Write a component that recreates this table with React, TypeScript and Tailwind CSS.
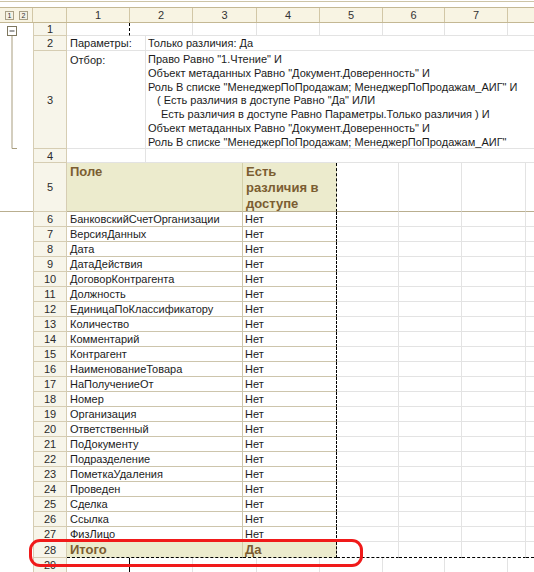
import React from "react";

const FIELDS = [
  "БанковскийСчетОрганизации",
  "ВерсияДанных",
  "Дата",
  "ДатаДействия",
  "ДоговорКонтрагента",
  "Должность",
  "ЕдиницаПоКлассификатору",
  "Количество",
  "Комментарий",
  "Контрагент",
  "НаименованиеТовара",
  "НаПолучениеОт",
  "Номер",
  "Организация",
  "Ответственный",
  "ПоДокументу",
  "Подразделение",
  "ПометкаУдаления",
  "Проведен",
  "Сделка",
  "Ссылка",
  "ФизЛицо",
];

const FILTER = [
  { text: 'Право Равно "1.Чтение" И', indent: "pl-0" },
  { text: 'Объект метаданных Равно "Документ.Доверенность" И', indent: "pl-0" },
  { text: 'Роль В списке "МенеджерПоПродажам; МенеджерПоПродажам_АИГ" И', indent: "pl-0" },
  { text: '( Есть различия в доступе Равно "Да" ИЛИ', indent: "pl-[9px]" },
  { text: "Есть различия в доступе Равно Параметры.Только различия ) И", indent: "pl-[13px]" },
  { text: 'Объект метаданных Равно "Документ.Доверенность" И', indent: "pl-0" },
  { text: 'Роль В списке "МенеджерПоПродажам; МенеджерПоПродажам_АИГ"', indent: "pl-0" },
];

const HEAD_COLS = ["w-[63px]", "w-[63px]", "w-[64px]", "w-[63px]", "w-[63px]", "w-[62px]", "w-[63px]"];
const GRID_RIGHT = ["w-[62px]", "w-[63px]", "w-[64px]"];

const Num = ({ n }: { n?: number }) => (
  <div className="w-[34px] shrink-0 border-l border-r border-b border-[#d6cdb3] bg-[#f7f5ea] flex items-center justify-center text-[#2b2b2b]">
    {n}
  </div>
);

// empty light grid cells right of the report (337 .. end)
const RightGrid = ({ bottom = "border-[#e3e3e3]" }: { bottom?: string }) => (
  <>
    {GRID_RIGHT.map((w, i) => (
      <div key={i} className={`${w} shrink-0 border-r border-b border-r-[#e3e3e3] ${bottom}`} />
    ))}
    <div className={`flex-1 border-b ${bottom}`} />
  </>
);

// row that follows the header columns (rows 1 and 29)
const HeaderGridRow = ({ n, h, first }: { n: number; h: string; first: string }) => (
  <div className={`flex ${h}`}>
    <Num n={n} />
    {HEAD_COLS.map((w, i) => (
      <div
        key={i}
        className={`${w} shrink-0 border-b border-r border-b-[#e3e3e3] ${i === 0 ? first : "border-r-[#e3e3e3]"}`}
      />
    ))}
    <div className="flex-1 border-b border-[#e3e3e3]" />
  </div>
);

export default function App() {
  return (
    <div className="relative w-[534px] h-[572px] overflow-hidden bg-white font-['Liberation_Sans',Arial,sans-serif] text-[11px] text-[#1c1c1c]">
      <div className="h-[1px] mt-[1px] bg-[#cdc4a6]" />
      <div className="h-[5px]" />

      {/* column header */}
      <div className="flex h-[16px] border-y border-[#c4b894] bg-[#f8f4e3] text-[#333] leading-[14px]">
        <div className="w-[33px] shrink-0 border-r border-[#d2c7a6] flex items-center gap-[5px] pl-[5px]">
          <span className="w-[9px] h-[9px] border border-[#a9a085] bg-[#f4f1e4] text-[7px] leading-[7px] flex items-center justify-center">1</span>
          <span className="w-[9px] h-[9px] border border-[#a9a085] bg-[#f4f1e4] text-[7px] leading-[7px] flex items-center justify-center">2</span>
        </div>
        <div className="w-[34px] shrink-0 border-r border-[#d2c7a6]" />
        {HEAD_COLS.map((w, i) => (
          <div key={i} className={`${w} shrink-0 border-r border-[#d2c7a6] text-center`}>
            {i + 1}
          </div>
        ))}
        <div className="flex-1" />
      </div>

      <div className="flex">
        {/* outline gutter */}
        <div className="w-[33px] shrink-0">
          <div className="h-[189px] border-b border-[#b9ae8f]">
            <svg width="33" height="188" className="block">
              <rect x="7.5" y="3.5" width="9" height="9" fill="#fff" stroke="#7e775f" />
              <line x1="9.5" y1="8" x2="14.5" y2="8" stroke="#444" />
              <line x1="12" y1="13" x2="12" y2="125.5" stroke="#a89d7e" />
              <line x1="12" y1="125.5" x2="17" y2="125.5" stroke="#a89d7e" />
            </svg>
          </div>
        </div>

        <div className="flex-1 flex flex-col leading-[14px]">
          <HeaderGridRow n={1} h="h-[13px]" first="border-r-black [border-right-style:dashed]" />

          {/* row 2 */}
          <div className="flex h-[15px]">
            <Num n={2} />
            <div className="w-[79px] shrink-0 border-r border-b border-[#e3e3e3] pl-[3px] flex items-center whitespace-nowrap">
              Параметры:
            </div>
            <div className="flex-1 border-b border-[#e3e3e3] pl-[2px] flex items-center whitespace-nowrap">
              Только различия: Да
            </div>
          </div>

          {/* row 3 */}
          <div className="flex h-[98px]">
            <Num n={3} />
            <div className="w-[79px] shrink-0 border-r border-b border-[#e3e3e3] pl-[3px] pt-[2px]">Отбор:</div>
            <div className="flex-1 border-b border-[#e3e3e3] pl-[2px] pt-[2px] leading-[13.8px] whitespace-nowrap overflow-hidden">
              {FILTER.map((l, i) => (
                <div key={i} className={l.indent}>
                  {l.text}
                </div>
              ))}
            </div>
          </div>

          {/* row 4 */}
          <div className="flex h-[14px]">
            <Num n={4} />
            <div className="w-[79px] shrink-0 border-r border-b border-[#e3e3e3]" />
            <div className="flex-1 border-b border-[#e3e3e3]" />
          </div>

          {/* row 5 - table header */}
          <div className="flex h-[49px]">
            <Num n={5} />
            <div className="w-[176px] shrink-0 bg-[#ecebcd] border-r border-b border-r-[#d3cfa8] border-b-[#b9ae8f] pl-[3px] pt-[1px] font-bold text-[13px] leading-[16px] text-[#7b5d31]">
              Поле
            </div>
            <div className="w-[94px] shrink-0 bg-[#ecebcd] border-r border-b border-r-black [border-right-style:dashed] border-b-[#b9ae8f] pl-[3px] pt-[1px] font-bold text-[13px] leading-[16px] text-[#7b5d31]">
              Есть
              <br />
              различия в
              <br />
              доступе
            </div>
            <RightGrid bottom="border-b-[#b9ae8f]" />
          </div>

          {/* data rows */}
          {FIELDS.map((f, i) => (
            <div key={f} className="flex h-[15px]">
              <Num n={i + 6} />
              <div className="w-[176px] shrink-0 border-r border-b border-[#cdc5ac] pl-[3px] flex items-center whitespace-nowrap">
                {f}
              </div>
              <div className="w-[94px] shrink-0 border-b border-r border-b-[#cdc5ac] border-r-black [border-right-style:dashed] pl-[2px] flex items-center">
                Нет
              </div>
              <RightGrid />
            </div>
          ))}

          {/* row 28 - total */}
          <div className="flex h-[16px]">
            <Num n={28} />
            <div className="w-[176px] shrink-0 bg-[#ecebcd] border-r border-b border-r-[#d3cfa8] border-b-black [border-bottom-style:dashed] pl-[3px] flex items-center font-bold text-[13px] text-[#7b5d31]">
              Итого
            </div>
            <div className="w-[94px] shrink-0 bg-[#ecebcd] border-r border-b border-black border-dashed pl-[2px] flex items-center font-bold text-[13px] text-[#7b5d31]">
              Да
            </div>
            {GRID_RIGHT.map((w, i) => (
              <div key={i} className={`${w} shrink-0 border-r border-b border-r-[#e3e3e3] border-b-black [border-bottom-style:dashed]`} />
            ))}
            <div className="flex-1 border-b border-black border-dashed" />
          </div>

          <HeaderGridRow n={29} h="h-[15px]" first="border-r-black" />
        </div>
      </div>

      {/* highlight */}
      <div className="absolute left-[29px] top-[539px] w-[334px] h-[28px] border-[3px] border-[#f01a1a] rounded-[11px]" />
    </div>
  );
}
